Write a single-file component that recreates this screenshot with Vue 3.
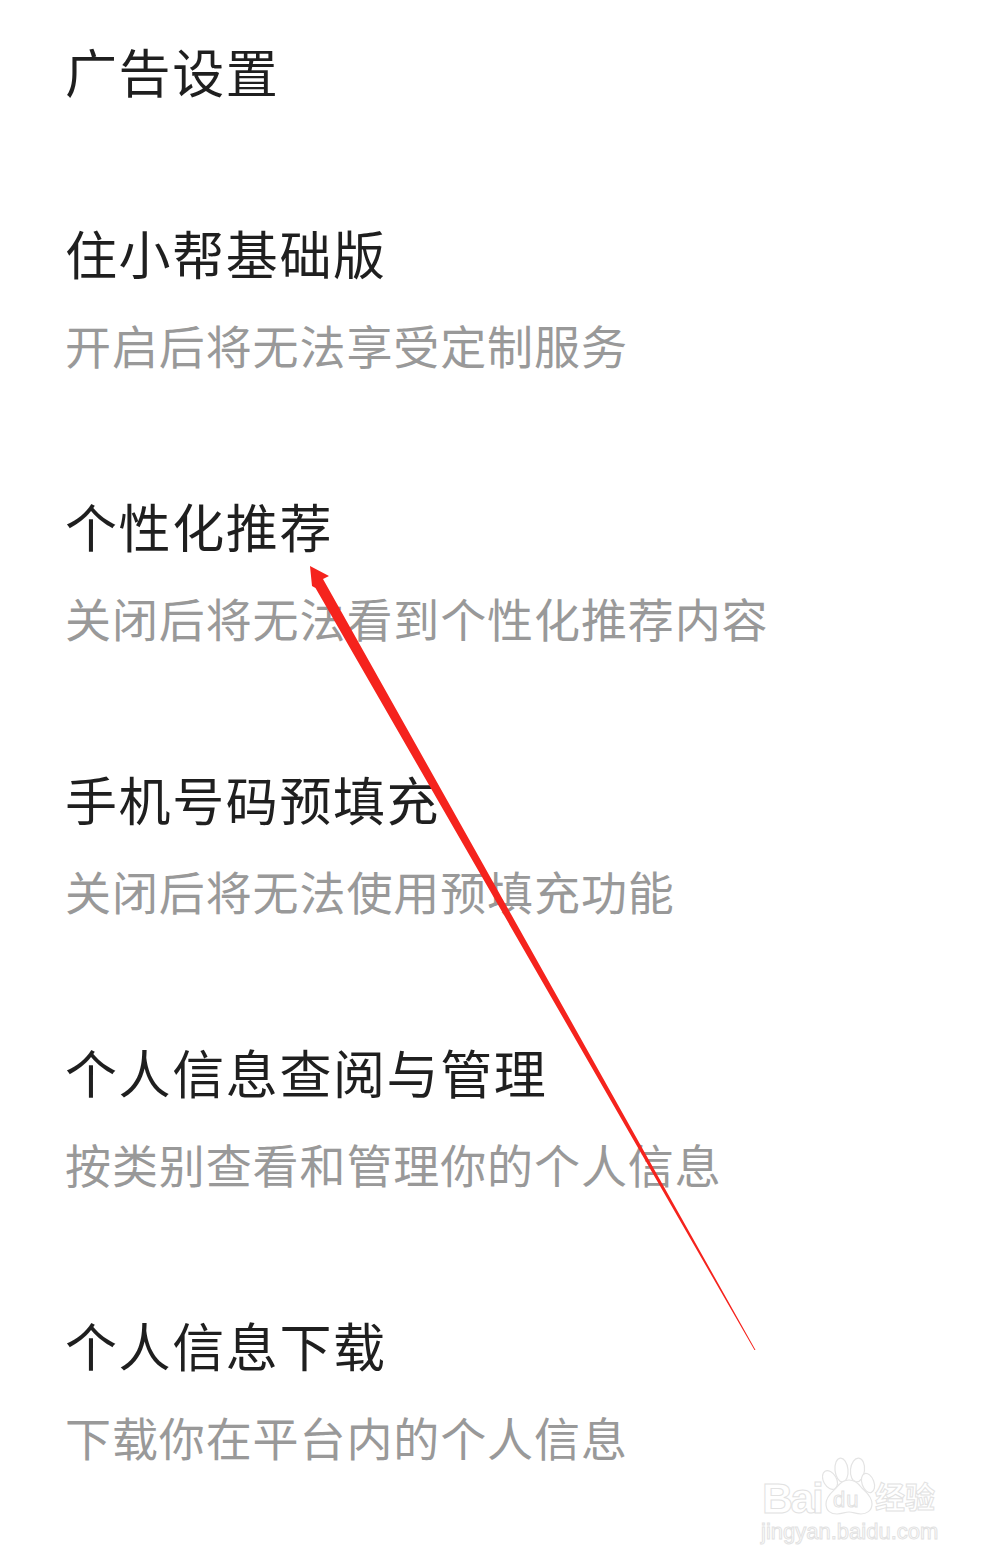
<script setup>
const items = [
  { title: '住小帮基础版', desc: '开启后将无法享受定制服务' },
  { title: '个性化推荐', desc: '关闭后将无法看到个性化推荐内容' },
  { title: '手机号码预填充', desc: '关闭后将无法使用预填充功能' },
  { title: '个人信息查阅与管理', desc: '按类别查看和管理你的个人信息' },
  { title: '个人信息下载', desc: '下载你在平台内的个人信息' },
]
</script>

<template>
  <main class="page">
    <h1 class="heading">广告设置</h1>
    <ul class="list">
      <li v-for="item in items" :key="item.title" class="item">
        <h2 class="title">{{ item.title }}</h2>
        <p class="desc">{{ item.desc }}</p>
      </li>
    </ul>

    <svg class="arrow" viewBox="0 0 993 1564" width="993" height="1564" aria-hidden="true">
      <polygon fill="#f5231d" points="310,566 329,576 323,579 755.5,1350 754.5,1350 315.5,588 312,586" />
    </svg>

    <div class="mark" aria-hidden="true">
      <div class="mark-top">
        <span class="mark-bai">Bai</span>
        <svg class="paw" viewBox="0 0 54 60" width="54" height="60">
          <g fill="#fff" stroke="#e4e4e4" stroke-width="1.2">
            <ellipse cx="8" cy="24" rx="6.5" ry="10" transform="rotate(-30 8 24)" />
            <ellipse cx="19.5" cy="14" rx="6.5" ry="12" transform="rotate(-6 19.5 14)" />
            <ellipse cx="35.5" cy="14" rx="7" ry="12" transform="rotate(6 35.5 14)" />
            <ellipse cx="46" cy="27" rx="6" ry="10" transform="rotate(-20 46 27)" />
            <path d="M27 24c6 0 9 3 12 7 3 4 11 8 11 17 0 7-6 10-11 10-5 0-8-2-12-2s-7 2-12 2c-6 0-11-3-11-10 0-9 8-13 11-17 3-4 6-7 12-7z" />
          </g>
        </svg>
        <span class="mark-du">du</span>
        <span class="mark-cn">经验</span>
      </div>
      <div class="mark-url">jingyan.baidu.com</div>
    </div>
  </main>
</template>

<style scoped>
.page {
  position: relative;
  box-sizing: border-box;
  width: 993px;
  height: 1564px;
  padding: 45px 0 0 65px;
  overflow: hidden;
  background: #fff;
  font-family: "Liberation Sans", "Noto Sans CJK SC", sans-serif;
}
.heading,
.title {
  margin: 0;
  color: #1f1f1f;
  font-size: 52px;
  font-weight: 400;
  line-height: 60px;
  letter-spacing: 1.6px;
  white-space: nowrap;
}
.list {
  display: flex;
  flex-direction: column;
  gap: 122px;
  margin: 122px 0 0;
  padding: 0;
  list-style: none;
}
.desc {
  margin: 31px 0 0;
  color: #999;
  font-size: 46px;
  line-height: 60px;
  letter-spacing: 0.9px;
  white-space: nowrap;
}
.arrow {
  position: absolute;
  top: 0;
  left: 0;
}
.mark {
  position: absolute;
  top: 1456px;
  left: 761px;
  width: 180px;
  color: #fff;
  -webkit-text-stroke: 1px #e2e2e2;
}
.mark-top {
  position: relative;
  height: 60px;
}
.mark-bai {
  position: absolute;
  top: 20px;
  left: 1px;
  font-size: 43px;
  font-weight: 700;
  line-height: 44px;
  letter-spacing: -2.5px;
}
.paw {
  position: absolute;
  top: 0;
  left: 61px;
}
.mark-du {
  position: absolute;
  top: 32px;
  left: 72px;
  font-size: 22px;
  line-height: 24px;
  letter-spacing: 1px;
}
.mark-cn {
  position: absolute;
  top: 24px;
  left: 114px;
  font-size: 30px;
  font-weight: 700;
  line-height: 36px;
}
.mark-url {
  margin-top: 2px;
  font-size: 22px;
  line-height: 28px;
  white-space: nowrap;
}
</style>
